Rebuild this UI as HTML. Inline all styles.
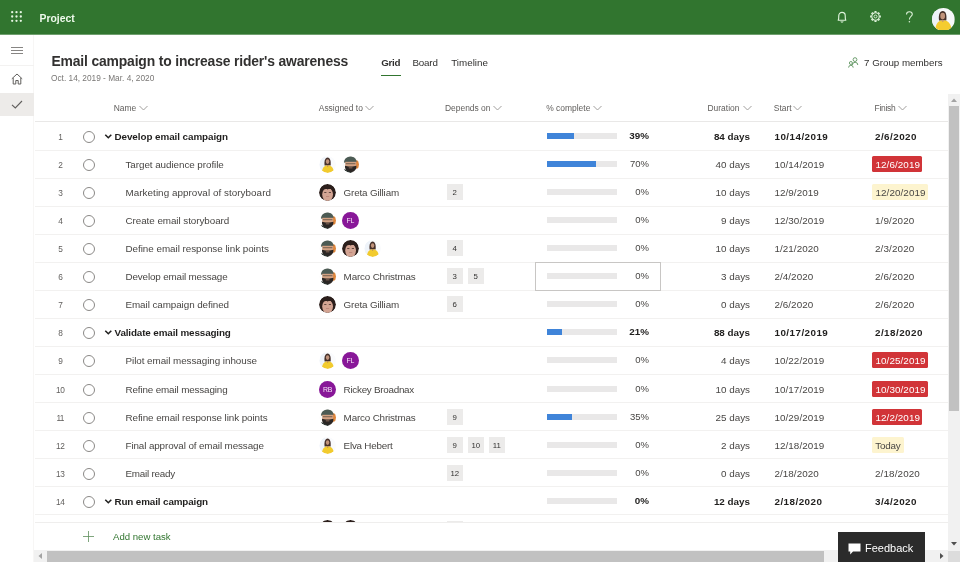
<!DOCTYPE html>
<html lang="en">
<head>
<meta charset="utf-8">
<title>Project</title>
<style>
*{box-sizing:border-box;margin:0;padding:0}
html,body{width:960px;height:562px;overflow:hidden;background:#fff;font-family:"Liberation Sans",sans-serif;color:#323130}
#app{position:absolute;left:0;top:0;width:960px;height:562px;overflow:hidden;will-change:transform;opacity:.999}
body{position:relative}
.top{position:absolute;left:0;top:0;width:960px;height:35px;background:#31752f;border-bottom:1px solid #6f9f6e}
.top .title{position:absolute;left:39.5px;top:0.6px;line-height:35px;font-size:10.4px;font-weight:bold;color:#eefaec}
.waffle{position:absolute;left:11px;top:11.1px;width:11px;height:11px}
.nav{position:absolute;left:0;top:35px;width:34px;height:527px;background:#fff;border-right:1px solid #f7f6f5}
.nav .sel{position:absolute;left:0;top:57.5px;width:34px;height:23.5px;background:#edebe9}
.nav .ln{position:absolute;left:0;top:30px;width:34px;height:1px;background:#f3f2f1}
.h1{position:absolute;left:51.5px;top:51px;font-size:13.9px;letter-spacing:-0.16px;font-weight:bold;color:#323130;line-height:20px;white-space:nowrap}
.sub{position:absolute;left:51px;top:72px;font-size:8.3px;color:#797775;line-height:12px;white-space:nowrap}
.tab{position:absolute;top:55.75px;font-size:9.8px;line-height:14px;color:#323130;white-space:nowrap}
.tabu{position:absolute;left:381px;top:74.5px;width:20px;height:1.5px;background:#31752f}
.grp{position:absolute;left:864px;top:55.6px;font-size:9.75px;line-height:14px;color:#323130;white-space:nowrap}
.hd{position:absolute;top:102px;font-size:8.45px;line-height:12px;color:#605e5c;white-space:nowrap}
.hd svg{position:absolute;top:2.6px;width:9px;height:6px}
.tline{position:absolute;left:35px;top:121px;width:913px;height:1px;background:#e9e8e7}
.row{position:absolute;left:35px;top:0;width:913px;height:28px;border-bottom:1px solid #f2f1f0;font-size:9.85px;line-height:28px;color:#484644;white-space:nowrap}
.row span{position:absolute;top:0}
.rc{position:absolute;left:0;width:100%;height:28px}
.row .num{left:15.5px;width:20px;text-align:center;font-size:8.3px;color:#605e5c}
.row .num.d2{letter-spacing:-0.5px;left:15.2px}
.row .circ{left:47.5px;top:8px;width:12px;height:12px;border:1px solid #8a8886;border-radius:50%}
.row .chev{position:absolute;left:69.4px;top:8.8px;width:8.6px;height:8.6px}
.row .name{left:90.5px}
.row .name.g{left:79.5px}
.row.b{font-weight:bold;color:#201f1e}
.row.b .num{font-weight:normal}
.av{position:absolute;top:4.5px;width:17px;height:17px;border-radius:50%;margin-left:-35px}
.ini{background:#881798;color:#f6e6f8;font-size:6.9px;line-height:17.5px;text-align:center;font-weight:normal;width:17px;height:17px;letter-spacing:-0.2px}
.row .an{left:308.6px}
.row .dep{margin-left:-35px;top:5px;width:15.5px;height:16px;background:#ecebea;font-size:7.8px;line-height:18px;text-align:center;color:#323130;font-weight:normal}
.row .bar{left:512px;top:10px;width:70px;height:6px;background:#e9e8e8}
.row .bar i{position:absolute;left:0;top:0;height:6px;background:#3f84d9}
.row .pct{left:584px;top:-1.5px;width:30px;text-align:right;font-size:9.5px}
.row.b .pct{font-size:9.85px}
.row .dur{left:650px;width:65px;text-align:right}
.row .st{left:739.5px}
.row.b .st,.row.b .fin{letter-spacing:0.45px}
.row .fin{left:840px;letter-spacing:0.13px}
.row .st{letter-spacing:0.05px}
.row .fin.red{left:837px;top:4.5px;height:16px;line-height:17.5px;padding:0 2px 0 3.5px;letter-spacing:0.08px;background:#d13438;color:#fff;border-radius:1.5px}
.row .fin.yel{left:837px;top:4.5px;height:16px;line-height:17.5px;padding:0 2px 0 3.5px;letter-spacing:0.08px;background:#fdf4cf;color:#484644;border-radius:1.5px}
.add{position:absolute;left:113px;top:530px;font-size:9.6px;line-height:14px;color:#31752f}
.plus{position:absolute;left:83px;top:531px;width:11px;height:11px}
.vs{position:absolute;left:948px;top:94px;width:12px;height:457px;background:#f1f1f1;z-index:2}
.vs i{position:absolute;left:1px;top:12px;width:10px;height:305px;background:#c1c1c1}
.hs{position:absolute;left:34px;top:550px;width:926px;height:12px;background:#f1f1f1}
.hs i{position:absolute;left:13px;top:1px;width:777px;height:11px;background:#c1c1c1}
.corner{position:absolute;left:948px;top:551px;width:12px;height:11px;background:#dcdcdc}
.fb{position:absolute;left:838px;top:532px;width:87px;height:30px;background:#2b2b2b;color:#fff;font-size:11px;line-height:32px}
.fb span{position:absolute;left:27px;top:0}
.whitebar{position:absolute;left:35px;top:522px;width:913px;height:29px;background:#fff;border-top:1px solid #efeeed}
.focus{position:absolute;left:535px;top:262px;width:126px;height:29px;border:1px solid #c8c6c4}
.row .fin.yel.tod{padding-left:3.3px;letter-spacing:-0.2px;padding-right:3px}
</style>
</head>
<body>
<div id="app">
<div class="top">
<svg class="waffle" viewBox="0 0 11 11"><g fill="#e6f6e3"><circle cx="1.2" cy="1.2" r="1.15"/><circle cx="5.5" cy="1.2" r="1.15"/><circle cx="9.8" cy="1.2" r="1.15"/><circle cx="1.2" cy="5.5" r="1.15"/><circle cx="5.5" cy="5.5" r="1.15"/><circle cx="9.8" cy="5.5" r="1.15"/><circle cx="1.2" cy="9.8" r="1.15"/><circle cx="5.5" cy="9.8" r="1.15"/><circle cx="9.8" cy="9.8" r="1.15"/></g></svg>
<div class="title">Project</div>
<svg style="position:absolute;left:837px;top:10.8px;width:10px;height:13px" viewBox="0 0 10 13"><path d="M1.2 9.2 C2 8 1.6 6.4 1.8 4.6 a3.2 3.2 0 0 1 6.4 0 C8.4 6.4 8 8 8.8 9.2 Z" fill="none" stroke="#dff3dc" stroke-width="1.15" stroke-linejoin="round"/><path d="M3.8 10.4 a1.3 1.3 0 0 0 2.4 0" fill="none" stroke="#dff3dc" stroke-width="1.1"/></svg>
<svg style="position:absolute;left:869.2px;top:10.3px;width:13px;height:13px" viewBox="0 0 14 14"><circle cx="7" cy="7" r="4" fill="none" stroke="#dff3dc" stroke-width="1.2"/><circle cx="7" cy="7" r="1.6" fill="none" stroke="#dff3dc" stroke-width="1"/><g stroke="#dff3dc" stroke-width="2.2"><path d="M7 1.2v1.6M7 11.2v1.6M1.2 7h1.6M11.2 7h1.6M2.9 2.9l1.1 1.1M10 10l1.1 1.1M2.9 11.1l1.1-1.1M10 4l1.1-1.1"/></g></svg>
<svg style="position:absolute;left:904.6px;top:11px;width:9px;height:12.5px" viewBox="0 0 9 13"><path d="M1.4 3.6 C1.4 1.8 2.8 0.8 4.4 0.8 C6.2 0.8 7.4 1.9 7.4 3.4 C7.4 5.6 4.4 5.8 4.4 8.8" fill="none" stroke="#dff3dc" stroke-width="1.1"/><circle cx="4.4" cy="11.2" r="0.8" fill="#dff3dc"/></svg>
<svg style="position:absolute;left:931.8px;top:7.7px;width:22.8px;height:22.8px" viewBox="0 0 22 22"><defs><clipPath id="cu"><circle cx="11" cy="11" r="11"/></clipPath></defs><g clip-path="url(#cu)"><rect width="22" height="22" fill="#f6f8fa"/><rect width="7" height="22" fill="#edf2f8"/><path d="M6.8 12 C6 7 7.4 3 10.4 3 C13.4 3 14.4 7 13.8 12 Z" fill="#45302a"/><ellipse cx="10.3" cy="7.8" rx="2.3" ry="3.2" fill="#c0937b"/><path d="M3 22 C3.2 15 6.6 11.8 10.8 11.8 C15 11.8 18.8 15 19 22 Z" fill="#f4cc30"/><path d="M9 11.8 L10.4 13.8 L11.8 11.8 Z" fill="#c0937b"/></g></svg>
</div>
<div class="nav">
<svg style="position:absolute;left:10.7px;top:12px;width:12px;height:7px" viewBox="0 0 12 7"><path d="M0 0.5h12M0 3.5h12M0 6.5h12" stroke="#797775" stroke-width="0.9"/></svg>
<svg style="position:absolute;left:11px;top:38px;width:12px;height:12px" viewBox="0 0 12 12"><path d="M0.8 5.8 L6 1 L11.2 5.8 M2.2 5 V11 H4.8 V7.5 H7.2 V11 H9.8 V5" fill="none" stroke="#605e5c" stroke-width="1"/></svg>
<div class="ln"></div><div class="sel"></div>
<svg style="position:absolute;left:11px;top:65px;width:12px;height:9px" viewBox="0 0 12 9"><path d="M1 4.8 L4.3 8 L11 1" fill="none" stroke="#605e5c" stroke-width="1.1"/></svg>
</div>
<svg width="0" height="0" style="position:absolute"><defs><clipPath id="c"><circle cx="8.5" cy="8.5" r="8.5"/></clipPath></defs></svg>
<div class="h1">Email campaign to increase rider's awareness</div>
<div class="sub">Oct. 14, 2019 - Mar. 4, 2020</div>
<div class="tab" style="left:381.25px;font-weight:bold;letter-spacing:-0.3px">Grid</div>
<div class="tab" style="left:412.5px;letter-spacing:-0.2px">Board</div>
<div class="tab" style="left:451.25px">Timeline</div>
<div class="tabu"></div>
<svg style="position:absolute;left:848px;top:56.5px;width:10.5px;height:11px" viewBox="0 0 10.5 11"><g fill="none" stroke="#5f9460" stroke-width="0.9"><circle cx="7" cy="2.6" r="1.9"/><path d="M4.4 8 a2.7 2.7 0 0 1 5.4 0"/><circle cx="2.9" cy="6" r="1.5"/><path d="M0.6 10.6 a2.3 2.3 0 0 1 4.6 0"/></g></svg>
<div class="grp">7 Group members</div>

<div class="hd" style="left:113.75px">Name<svg style="left:25px" viewBox="0 0 9 6"><path d="M0.5 1 L4.5 5 L8.5 1" fill="none" stroke="#a19f9d" stroke-width="1"/></svg></div>
<div class="hd" style="left:318.75px">Assigned to<svg style="left:46px" viewBox="0 0 9 6"><path d="M0.5 1 L4.5 5 L8.5 1" fill="none" stroke="#a19f9d" stroke-width="1"/></svg></div>
<div class="hd" style="left:445px">Depends on<svg style="left:48px" viewBox="0 0 9 6"><path d="M0.5 1 L4.5 5 L8.5 1" fill="none" stroke="#a19f9d" stroke-width="1"/></svg></div>
<div class="hd" style="left:546.25px">% complete<svg style="left:47px" viewBox="0 0 9 6"><path d="M0.5 1 L4.5 5 L8.5 1" fill="none" stroke="#a19f9d" stroke-width="1"/></svg></div>
<div class="hd" style="left:707.5px">Duration<svg style="left:35px" viewBox="0 0 9 6"><path d="M0.5 1 L4.5 5 L8.5 1" fill="none" stroke="#a19f9d" stroke-width="1"/></svg></div>
<div class="hd" style="left:773.75px">Start<svg style="left:19.2px" viewBox="0 0 9 6"><path d="M0.5 1 L4.5 5 L8.5 1" fill="none" stroke="#a19f9d" stroke-width="1"/></svg></div>
<div class="hd" style="left:874.5px;letter-spacing:-0.25px">Finish<svg style="left:23px" viewBox="0 0 9 6"><path d="M0.5 1 L4.5 5 L8.5 1" fill="none" stroke="#a19f9d" stroke-width="1"/></svg></div>
<div class="tline"></div>
<div class="row b" style="top:123px"><div class="rc" style="top:0px"><span class="num">1</span><span class="circ"></span><svg class="chev" viewBox="0 0 10 10"><path d="M1.5 3.2 L5 6.7 L8.5 3.2" fill="none" stroke="#201f1e" stroke-width="1.8"/></svg><span class="name g" style="letter-spacing:-0.063px">Develop email campaign</span><span class="bar"><i style="width:27.3px"></i></span><span class="pct">39%</span><span class="dur">84 days</span><span class="st">10/14/2019</span><span class="fin">2/6/2020</span></div></div>
<div class="row" style="top:151px"><div class="rc" style="top:0px"><span class="num">2</span><span class="circ"></span><span class="name" style="letter-spacing:-0.059px">Target audience profile</span><svg class="av" style="left:319px" viewBox="0 0 17 17"><g clip-path="url(#c)" transform="translate(0.3 0)"><rect width="17" height="17" fill="#fafbfd"/><rect width="6" height="17" fill="#eef3f9"/><path d="M5.3 9.6 C4.7 5.4 5.7 1.6 8.3 1.6 C10.9 1.6 11.8 5.4 11.3 9.6 Z" fill="#45302a"/><ellipse cx="8.3" cy="5.6" rx="1.7" ry="2.3" fill="#c0937b"/><path d="M2.6 17 C2.8 11.4 5.4 9.2 8.5 9.2 C11.6 9.2 14.4 11.4 14.6 17 Z" fill="#f2cb2e"/><path d="M7.2 9.2 L8.4 11 L9.6 9.2 Z" fill="#b07f66"/></g></svg><svg class="av" style="left:341.5px" viewBox="0 0 17 17"><g clip-path="url(#c)" transform="translate(0.4 0)"><rect width="17" height="17" fill="#fbfaf8"/><path d="M11 3.6 L16.6 5 L16.6 12 L11 13.6 Z" fill="#e0863a"/><path d="M1.6 6.6 C1.6 2.6 4.6 0.4 8 0.4 C11.6 0.4 14 2.6 14.2 5.8 L13 6.8 L2.6 6.8 Z" fill="#4c5b54"/><rect x="2.8" y="5.8" width="11" height="5.6" fill="#d3a283"/><rect x="3.4" y="7.2" width="9.6" height="1" fill="#77614f"/><path d="M2.6 9.8 C5 10.8 11.4 10.8 14 9.8 C14.4 13.4 12 16.2 8.2 16.2 C4.8 16.2 2.2 13.4 2.6 9.8 Z" fill="#2b2624"/><rect x="6.4" y="11.4" width="3.6" height="0.9" fill="#94705e"/><path d="M0 17 L0.4 13.2 C3.4 12.8 6 15.2 8.4 16 L11 17 Z" fill="#2c3531"/></g></svg><span class="bar"><i style="width:49.0px"></i></span><span class="pct">70%</span><span class="dur">40 days</span><span class="st">10/14/2019</span><span class="fin red">12/6/2019</span></div></div>
<div class="row" style="top:179px"><div class="rc" style="top:0px"><span class="num">3</span><span class="circ"></span><span class="name" style="letter-spacing:0.050px">Marketing approval of storyboard</span><svg class="av" style="left:319px" viewBox="0 0 17 17"><g clip-path="url(#c)"><rect width="17" height="17" fill="#2c1f1c"/><ellipse cx="8.6" cy="10.6" rx="5.4" ry="7" fill="#d3a493"/><path d="M2 7 C3 2.6 6 1.6 8.6 1.6 C11.4 1.6 14.4 2.8 15.2 7 C12.5 5.2 11 4.6 8.6 5.4 C6.4 4.6 4.4 5.4 2 7 Z" fill="#2c1f1c"/><rect x="5.2" y="8" width="2.2" height="0.8" fill="#4a332c"/><rect x="9.8" y="8" width="2.2" height="0.8" fill="#4a332c"/><rect x="7" y="12.2" width="3.2" height="0.7" fill="#b57d72"/></g></svg><span class="an" style="letter-spacing:-0.156px">Greta Gilliam</span><span class="dep" style="left:447px">2</span><span class="bar"><i style="width:0.0px"></i></span><span class="pct">0%</span><span class="dur">10 days</span><span class="st">12/9/2019</span><span class="fin yel">12/20/2019</span></div></div>
<div class="row" style="top:207px"><div class="rc" style="top:0px"><span class="num">4</span><span class="circ"></span><span class="name" style="letter-spacing:-0.056px">Create email storyboard</span><svg class="av" style="left:319px" viewBox="0 0 17 17"><g clip-path="url(#c)" transform="translate(0.4 0)"><rect width="17" height="17" fill="#fbfaf8"/><path d="M11 3.6 L16.6 5 L16.6 12 L11 13.6 Z" fill="#e0863a"/><path d="M1.6 6.6 C1.6 2.6 4.6 0.4 8 0.4 C11.6 0.4 14 2.6 14.2 5.8 L13 6.8 L2.6 6.8 Z" fill="#4c5b54"/><rect x="2.8" y="5.8" width="11" height="5.6" fill="#d3a283"/><rect x="3.4" y="7.2" width="9.6" height="1" fill="#77614f"/><path d="M2.6 9.8 C5 10.8 11.4 10.8 14 9.8 C14.4 13.4 12 16.2 8.2 16.2 C4.8 16.2 2.2 13.4 2.6 9.8 Z" fill="#2b2624"/><rect x="6.4" y="11.4" width="3.6" height="0.9" fill="#94705e"/><path d="M0 17 L0.4 13.2 C3.4 12.8 6 15.2 8.4 16 L11 17 Z" fill="#2c3531"/></g></svg><div class="av ini" style="left:341.9px">FL</div><span class="bar"><i style="width:0.0px"></i></span><span class="pct">0%</span><span class="dur">9 days</span><span class="st">12/30/2019</span><span class="fin">1/9/2020</span></div></div>
<div class="row" style="top:235px"><div class="rc" style="top:0px"><span class="num">5</span><span class="circ"></span><span class="name" style="letter-spacing:-0.036px">Define email response link points</span><svg class="av" style="left:319px" viewBox="0 0 17 17"><g clip-path="url(#c)" transform="translate(0.4 0)"><rect width="17" height="17" fill="#fbfaf8"/><path d="M11 3.6 L16.6 5 L16.6 12 L11 13.6 Z" fill="#e0863a"/><path d="M1.6 6.6 C1.6 2.6 4.6 0.4 8 0.4 C11.6 0.4 14 2.6 14.2 5.8 L13 6.8 L2.6 6.8 Z" fill="#4c5b54"/><rect x="2.8" y="5.8" width="11" height="5.6" fill="#d3a283"/><rect x="3.4" y="7.2" width="9.6" height="1" fill="#77614f"/><path d="M2.6 9.8 C5 10.8 11.4 10.8 14 9.8 C14.4 13.4 12 16.2 8.2 16.2 C4.8 16.2 2.2 13.4 2.6 9.8 Z" fill="#2b2624"/><rect x="6.4" y="11.4" width="3.6" height="0.9" fill="#94705e"/><path d="M0 17 L0.4 13.2 C3.4 12.8 6 15.2 8.4 16 L11 17 Z" fill="#2c3531"/></g></svg><svg class="av" style="left:341.5px" viewBox="0 0 17 17"><g clip-path="url(#c)"><rect width="17" height="17" fill="#2c1f1c"/><ellipse cx="8.6" cy="10.6" rx="5.4" ry="7" fill="#d3a493"/><path d="M2 7 C3 2.6 6 1.6 8.6 1.6 C11.4 1.6 14.4 2.8 15.2 7 C12.5 5.2 11 4.6 8.6 5.4 C6.4 4.6 4.4 5.4 2 7 Z" fill="#2c1f1c"/><rect x="5.2" y="8" width="2.2" height="0.8" fill="#4a332c"/><rect x="9.8" y="8" width="2.2" height="0.8" fill="#4a332c"/><rect x="7" y="12.2" width="3.2" height="0.7" fill="#b57d72"/></g></svg><svg class="av" style="left:364.0px" viewBox="0 0 17 17"><g clip-path="url(#c)" transform="translate(0.3 0)"><rect width="17" height="17" fill="#fafbfd"/><rect width="6" height="17" fill="#eef3f9"/><path d="M5.3 9.6 C4.7 5.4 5.7 1.6 8.3 1.6 C10.9 1.6 11.8 5.4 11.3 9.6 Z" fill="#45302a"/><ellipse cx="8.3" cy="5.6" rx="1.7" ry="2.3" fill="#c0937b"/><path d="M2.6 17 C2.8 11.4 5.4 9.2 8.5 9.2 C11.6 9.2 14.4 11.4 14.6 17 Z" fill="#f2cb2e"/><path d="M7.2 9.2 L8.4 11 L9.6 9.2 Z" fill="#b07f66"/></g></svg><span class="dep" style="left:447px">4</span><span class="bar"><i style="width:0.0px"></i></span><span class="pct">0%</span><span class="dur">10 days</span><span class="st">1/21/2020</span><span class="fin">2/3/2020</span></div></div>
<div class="row" style="top:263px"><div class="rc" style="top:0px"><span class="num">6</span><span class="circ"></span><span class="name" style="letter-spacing:-0.146px">Develop email message</span><svg class="av" style="left:319px" viewBox="0 0 17 17"><g clip-path="url(#c)" transform="translate(0.4 0)"><rect width="17" height="17" fill="#fbfaf8"/><path d="M11 3.6 L16.6 5 L16.6 12 L11 13.6 Z" fill="#e0863a"/><path d="M1.6 6.6 C1.6 2.6 4.6 0.4 8 0.4 C11.6 0.4 14 2.6 14.2 5.8 L13 6.8 L2.6 6.8 Z" fill="#4c5b54"/><rect x="2.8" y="5.8" width="11" height="5.6" fill="#d3a283"/><rect x="3.4" y="7.2" width="9.6" height="1" fill="#77614f"/><path d="M2.6 9.8 C5 10.8 11.4 10.8 14 9.8 C14.4 13.4 12 16.2 8.2 16.2 C4.8 16.2 2.2 13.4 2.6 9.8 Z" fill="#2b2624"/><rect x="6.4" y="11.4" width="3.6" height="0.9" fill="#94705e"/><path d="M0 17 L0.4 13.2 C3.4 12.8 6 15.2 8.4 16 L11 17 Z" fill="#2c3531"/></g></svg><span class="an" style="letter-spacing:-0.166px">Marco Christmas</span><span class="dep" style="left:447px">3</span><span class="dep" style="left:468px">5</span><span class="bar"><i style="width:0.0px"></i></span><span class="pct">0%</span><span class="dur">3 days</span><span class="st">2/4/2020</span><span class="fin">2/6/2020</span></div></div>
<div class="row" style="top:291px"><div class="rc" style="top:0px"><span class="num">7</span><span class="circ"></span><span class="name" style="letter-spacing:-0.071px">Email campaign defined</span><svg class="av" style="left:319px" viewBox="0 0 17 17"><g clip-path="url(#c)"><rect width="17" height="17" fill="#2c1f1c"/><ellipse cx="8.6" cy="10.6" rx="5.4" ry="7" fill="#d3a493"/><path d="M2 7 C3 2.6 6 1.6 8.6 1.6 C11.4 1.6 14.4 2.8 15.2 7 C12.5 5.2 11 4.6 8.6 5.4 C6.4 4.6 4.4 5.4 2 7 Z" fill="#2c1f1c"/><rect x="5.2" y="8" width="2.2" height="0.8" fill="#4a332c"/><rect x="9.8" y="8" width="2.2" height="0.8" fill="#4a332c"/><rect x="7" y="12.2" width="3.2" height="0.7" fill="#b57d72"/></g></svg><span class="an" style="letter-spacing:-0.156px">Greta Gilliam</span><span class="dep" style="left:447px">6</span><span class="bar"><i style="width:0.0px"></i></span><span class="pct">0%</span><span class="dur">0 days</span><span class="st">2/6/2020</span><span class="fin">2/6/2020</span></div></div>
<div class="row b" style="top:319px"><div class="rc" style="top:0px"><span class="num">8</span><span class="circ"></span><svg class="chev" viewBox="0 0 10 10"><path d="M1.5 3.2 L5 6.7 L8.5 3.2" fill="none" stroke="#201f1e" stroke-width="1.8"/></svg><span class="name g" style="letter-spacing:-0.126px">Validate email messaging</span><span class="bar"><i style="width:14.7px"></i></span><span class="pct">21%</span><span class="dur">88 days</span><span class="st">10/17/2019</span><span class="fin">2/18/2020</span></div></div>
<div class="row" style="top:347px"><div class="rc" style="top:0px"><span class="num">9</span><span class="circ"></span><span class="name" style="letter-spacing:-0.051px">Pilot email messaging inhouse</span><svg class="av" style="left:319px" viewBox="0 0 17 17"><g clip-path="url(#c)" transform="translate(0.3 0)"><rect width="17" height="17" fill="#fafbfd"/><rect width="6" height="17" fill="#eef3f9"/><path d="M5.3 9.6 C4.7 5.4 5.7 1.6 8.3 1.6 C10.9 1.6 11.8 5.4 11.3 9.6 Z" fill="#45302a"/><ellipse cx="8.3" cy="5.6" rx="1.7" ry="2.3" fill="#c0937b"/><path d="M2.6 17 C2.8 11.4 5.4 9.2 8.5 9.2 C11.6 9.2 14.4 11.4 14.6 17 Z" fill="#f2cb2e"/><path d="M7.2 9.2 L8.4 11 L9.6 9.2 Z" fill="#b07f66"/></g></svg><div class="av ini" style="left:341.9px">FL</div><span class="bar"><i style="width:0.0px"></i></span><span class="pct">0%</span><span class="dur">4 days</span><span class="st">10/22/2019</span><span class="fin red">10/25/2019</span></div></div>
<div class="row" style="top:375px"><div class="rc" style="top:1px"><span class="num d2">10</span><span class="circ"></span><span class="name" style="letter-spacing:-0.139px">Refine email messaging</span><div class="av ini" style="left:319px">RB</div><span class="an" style="letter-spacing:-0.268px">Rickey Broadnax</span><span class="bar"><i style="width:0.0px"></i></span><span class="pct">0%</span><span class="dur">10 days</span><span class="st">10/17/2019</span><span class="fin red">10/30/2019</span></div></div>
<div class="row" style="top:403px"><div class="rc" style="top:1px"><span class="num d2">11</span><span class="circ"></span><span class="name" style="letter-spacing:-0.074px">Refine email response link points</span><svg class="av" style="left:319px" viewBox="0 0 17 17"><g clip-path="url(#c)" transform="translate(0.4 0)"><rect width="17" height="17" fill="#fbfaf8"/><path d="M11 3.6 L16.6 5 L16.6 12 L11 13.6 Z" fill="#e0863a"/><path d="M1.6 6.6 C1.6 2.6 4.6 0.4 8 0.4 C11.6 0.4 14 2.6 14.2 5.8 L13 6.8 L2.6 6.8 Z" fill="#4c5b54"/><rect x="2.8" y="5.8" width="11" height="5.6" fill="#d3a283"/><rect x="3.4" y="7.2" width="9.6" height="1" fill="#77614f"/><path d="M2.6 9.8 C5 10.8 11.4 10.8 14 9.8 C14.4 13.4 12 16.2 8.2 16.2 C4.8 16.2 2.2 13.4 2.6 9.8 Z" fill="#2b2624"/><rect x="6.4" y="11.4" width="3.6" height="0.9" fill="#94705e"/><path d="M0 17 L0.4 13.2 C3.4 12.8 6 15.2 8.4 16 L11 17 Z" fill="#2c3531"/></g></svg><span class="an" style="letter-spacing:-0.166px">Marco Christmas</span><span class="dep" style="left:447px">9</span><span class="bar"><i style="width:24.5px"></i></span><span class="pct">35%</span><span class="dur">25 days</span><span class="st">10/29/2019</span><span class="fin red">12/2/2019</span></div></div>
<div class="row" style="top:431px"><div class="rc" style="top:1px"><span class="num d2">12</span><span class="circ"></span><span class="name" style="letter-spacing:-0.112px">Final approval of email message</span><svg class="av" style="left:319px" viewBox="0 0 17 17"><g clip-path="url(#c)" transform="translate(0.3 0)"><rect width="17" height="17" fill="#fafbfd"/><rect width="6" height="17" fill="#eef3f9"/><path d="M5.3 9.6 C4.7 5.4 5.7 1.6 8.3 1.6 C10.9 1.6 11.8 5.4 11.3 9.6 Z" fill="#45302a"/><ellipse cx="8.3" cy="5.6" rx="1.7" ry="2.3" fill="#c0937b"/><path d="M2.6 17 C2.8 11.4 5.4 9.2 8.5 9.2 C11.6 9.2 14.4 11.4 14.6 17 Z" fill="#f2cb2e"/><path d="M7.2 9.2 L8.4 11 L9.6 9.2 Z" fill="#b07f66"/></g></svg><span class="an" style="letter-spacing:-0.230px">Elva Hebert</span><span class="dep" style="left:447px">9</span><span class="dep" style="left:468px">10</span><span class="dep" style="left:489px">11</span><span class="bar"><i style="width:0.0px"></i></span><span class="pct">0%</span><span class="dur">2 days</span><span class="st">12/18/2019</span><span class="fin yel tod">Today</span></div></div>
<div class="row" style="top:459px"><div class="rc" style="top:1px"><span class="num d2">13</span><span class="circ"></span><span class="name" style="letter-spacing:-0.226px">Email ready</span><span class="dep" style="left:447px">12</span><span class="bar"><i style="width:0.0px"></i></span><span class="pct">0%</span><span class="dur">0 days</span><span class="st">2/18/2020</span><span class="fin">2/18/2020</span></div></div>
<div class="row b" style="top:487px"><div class="rc" style="top:1px"><span class="num d2">14</span><span class="circ"></span><svg class="chev" viewBox="0 0 10 10"><path d="M1.5 3.2 L5 6.7 L8.5 3.2" fill="none" stroke="#201f1e" stroke-width="1.8"/></svg><span class="name g" style="letter-spacing:-0.124px">Run email campaign</span><span class="bar"><i style="width:0.0px"></i></span><span class="pct">0%</span><span class="dur">12 days</span><span class="st">2/18/2020</span><span class="fin">3/4/2020</span></div></div>
<div class="row" style="top:515.5px;border:0"><svg class="av" style="left:319px" viewBox="0 0 17 17"><g clip-path="url(#c)"><rect width="17" height="17" fill="#2c1f1c"/><ellipse cx="8.6" cy="10.6" rx="5.4" ry="7" fill="#d3a493"/><path d="M2 7 C3 2.6 6 1.6 8.6 1.6 C11.4 1.6 14.4 2.8 15.2 7 C12.5 5.2 11 4.6 8.6 5.4 C6.4 4.6 4.4 5.4 2 7 Z" fill="#2c1f1c"/><rect x="5.2" y="8" width="2.2" height="0.8" fill="#4a332c"/><rect x="9.8" y="8" width="2.2" height="0.8" fill="#4a332c"/><rect x="7" y="12.2" width="3.2" height="0.7" fill="#b57d72"/></g></svg><svg class="av" style="left:341.5px" viewBox="0 0 17 17"><g clip-path="url(#c)"><rect width="17" height="17" fill="#2c1f1c"/><ellipse cx="8.6" cy="10.6" rx="5.4" ry="7" fill="#d3a493"/><path d="M2 7 C3 2.6 6 1.6 8.6 1.6 C11.4 1.6 14.4 2.8 15.2 7 C12.5 5.2 11 4.6 8.6 5.4 C6.4 4.6 4.4 5.4 2 7 Z" fill="#2c1f1c"/><rect x="5.2" y="8" width="2.2" height="0.8" fill="#4a332c"/><rect x="9.8" y="8" width="2.2" height="0.8" fill="#4a332c"/><rect x="7" y="12.2" width="3.2" height="0.7" fill="#b57d72"/></g></svg><span class="dep" style="left:447px"></span></div>
<div class="focus"></div>
<div class="whitebar"></div>
<svg class="plus" viewBox="0 0 11 11"><path d="M5.5 0v11M0 5.5h11" stroke="#5f8f5d" stroke-width="0.8"/></svg>
<div class="add">Add new task</div>
<div class="vs"><i></i><svg style="position:absolute;left:3px;top:4px;width:6px;height:4px" viewBox="0 0 6 4"><path d="M0 4L3 0.5L6 4z" fill="#a3a3a3"/></svg><svg style="position:absolute;left:3px;top:448px;width:6px;height:4px" viewBox="0 0 6 4"><path d="M0 0L3 3.5L6 0z" fill="#505050"/></svg></div>
<div class="hs"><i></i><svg style="position:absolute;left:4px;top:3px;width:4px;height:6px" viewBox="0 0 4 6"><path d="M4 0L0.5 3L4 6z" fill="#a3a3a3"/></svg><svg style="position:absolute;left:906px;top:3px;width:4px;height:6px" viewBox="0 0 4 6"><path d="M0 0L3.5 3L0 6z" fill="#505050"/></svg></div>
<div class="corner"></div>
<div class="fb"><svg style="position:absolute;left:10px;top:11px;width:13px;height:12px" viewBox="0 0 13 12"><path d="M0.5 0.5h12v8H5l-2.8 3v-3H0.5z" fill="#fff"/></svg><span>Feedback</span></div>
</div>
</body>
</html>
